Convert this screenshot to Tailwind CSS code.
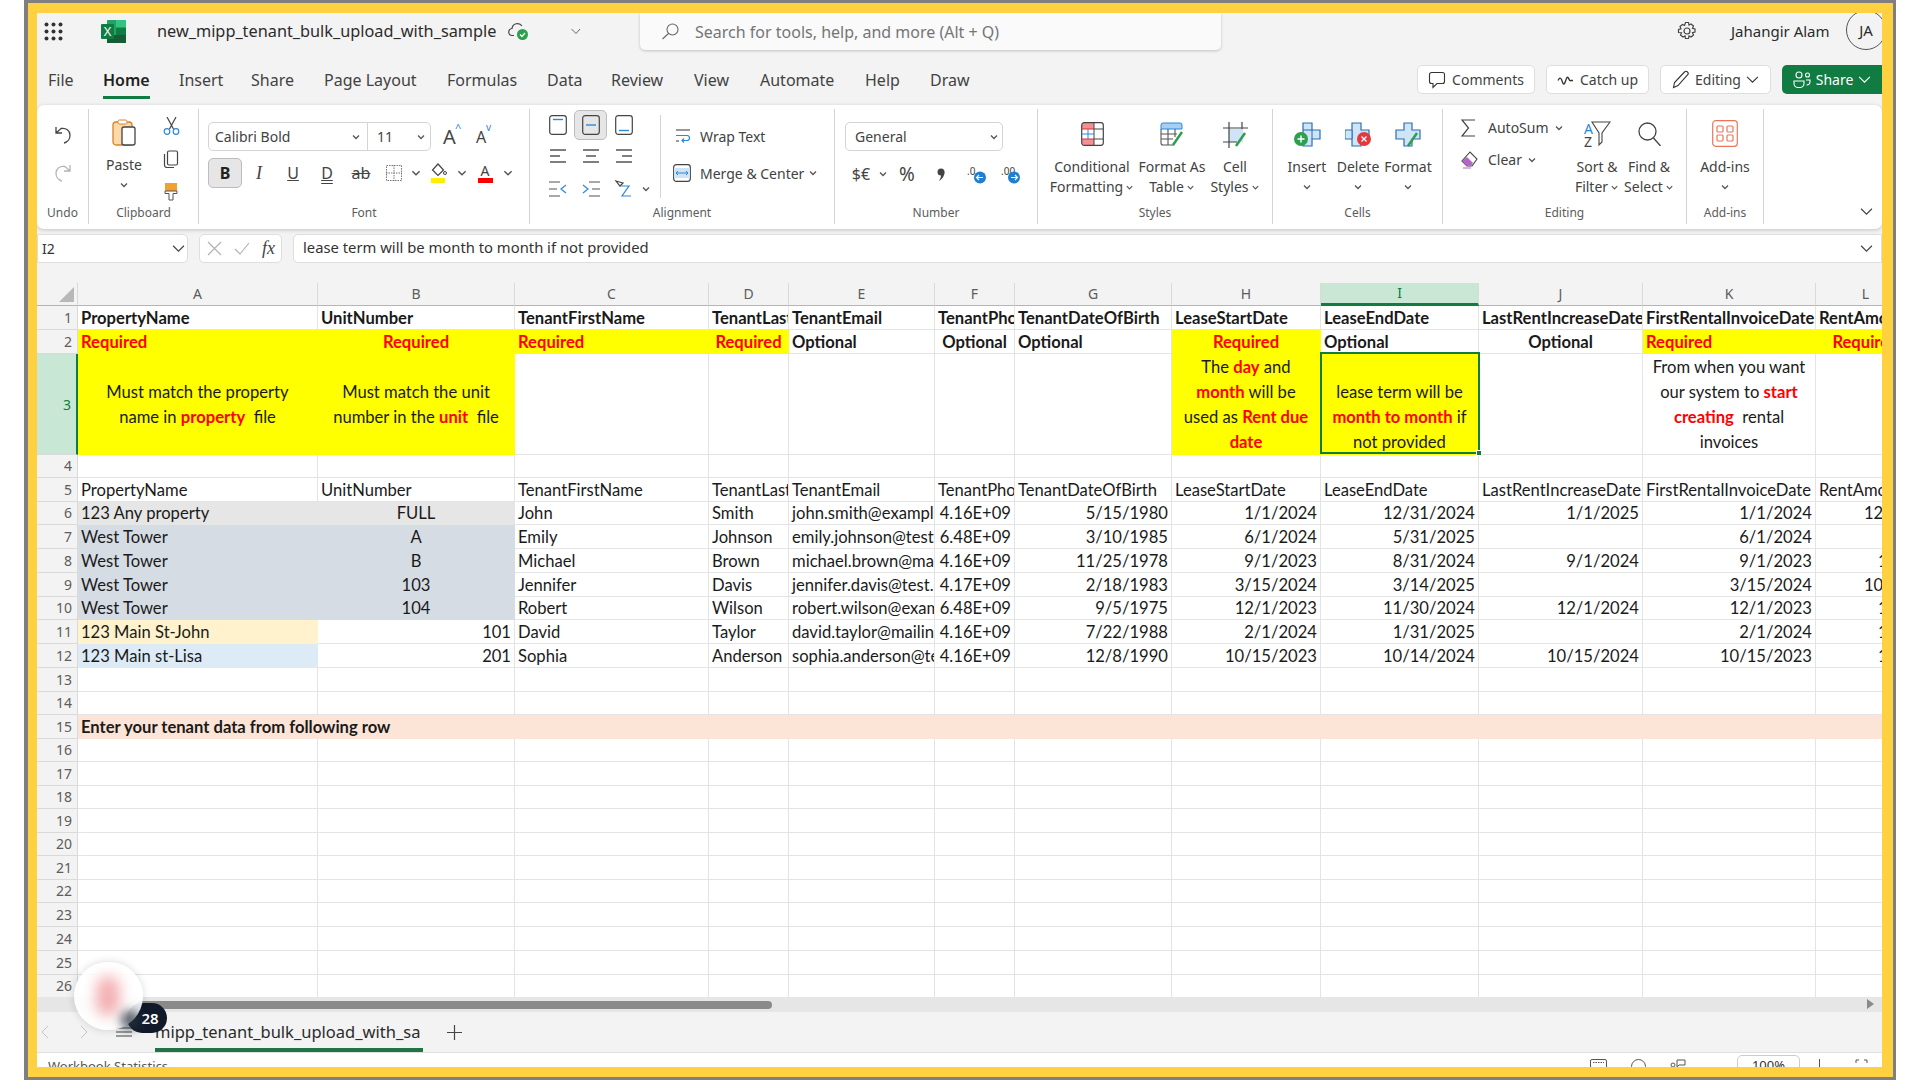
<!DOCTYPE html>
<html lang="en">
<head>
<meta charset="utf-8">
<title>new_mipp_tenant_bulk_upload_with_sample</title>
<script src="https://cdn.jsdelivr.net/npm/@tailwindcss/browser@4"></script>
</head>
<body class="bg-white overflow-hidden font-['Noto_Sans',sans-serif] text-[#333]">
<!-- Frame -->
<div class="ml-[24px] w-[1872px] h-[1080px] border-l-4 border-r-[3px] border-y-[3px] border-[#7f7f7f]">
<div class="relative w-full h-full border-l-[9px] border-r-[11px] border-y-[10px] border-[#ffd03f] bg-[#f3f3f3] flex flex-col overflow-hidden">

	<!-- Title bar -->
	<div class="h-[45px] pb-[9px] flex items-center shrink-0 relative">
		<svg class="ml-[7px] w-[19px] h-[19px]" viewBox="0 0 19 19" fill="#333"><circle cx="2.5" cy="2.5" r="2"/><circle cx="9.5" cy="2.5" r="2"/><circle cx="16.5" cy="2.5" r="2"/><circle cx="2.5" cy="9.5" r="2"/><circle cx="9.5" cy="9.5" r="2"/><circle cx="16.5" cy="9.5" r="2"/><circle cx="2.5" cy="16.5" r="2"/><circle cx="9.5" cy="16.5" r="2"/><circle cx="16.5" cy="16.5" r="2"/></svg>
		<svg class="ml-[38px] w-[25px] h-[23px]" viewBox="0 0 25 23"><rect x="6" width="19" height="23" rx="1" fill="#21a366"/><rect x="15" width="10" height="7" fill="#33c481"/><rect x="6" y="15" width="19" height="8" fill="#185c37"/><rect x="15" y="8" width="10" height="7" fill="#107c41"/><rect y="4" width="13" height="15" rx="1" fill="#107c41"/><text x="6.5" y="16" text-anchor="middle" font-size="12" fill="#fff" font-family="Liberation Sans">X</text></svg>
		<div class="ml-[31px] w-[351px] text-[16.300px] whitespace-nowrap text-[#2b2b2b]">new_mipp_tenant_bulk_upload_with_sample</div>
		<svg class="w-[21px] h-[20px]" viewBox="0 0 21 20" fill="none"><path d="M6 14.5H4.5a3.5 3.5 0 0 1-.5-7A5.5 5.5 0 0 1 14 5" stroke="#444" stroke-width="1.2"/><circle cx="14.5" cy="13.5" r="5.5" fill="#2e9e4f"/><path d="M12 13.5l2 2 3-3.5" stroke="#fff" stroke-width="1.2"/></svg>
		<svg class="ml-[41px] w-[12px] h-[12px]" viewBox="0 0 12 12" fill="none" stroke="#666"><path d="M1.5 4l4.500 4.500L10 4"/></svg>
		<div class="ml-[58px] self-start w-[581px] h-[37px] bg-[#fafafa] rounded-b-[5px] shadow-[0_1px_3px_rgba(0,0,0,0.2)] flex items-center">
			<svg class="ml-[21px] w-[19px] h-[17px]" viewBox="0 0 19 17" fill="none" stroke="#666" stroke-width="1.1"><circle cx="11.500" cy="6.500" r="5.500"/><path d="M7.500 10.500L1.500 16"/></svg>
			<span class="ml-[15px] text-[16px] text-[#757575] whitespace-nowrap">Search for tools, help, and more (Alt + Q)</span>
		</div>
		<svg class="ml-[456px] w-[20px] h-[20px]" viewBox="0 0 20 20" fill="none" stroke="#444" stroke-width="1.2"><circle cx="10" cy="10" r="3"/><path d="M8.500 1.500h3l.5 2.500 2-1 2.500 2-1 2.300 2.500.700v3l-2.500.700 1 2.300-2.500 2-2-1-.5 2.500h-3l-.5-2.500-2 1-2.500-2 1-2.300L1.500 11.500v-3L4 7.800 3 5.500l2.500-2 2 1z"/></svg>
		<span class="ml-[34px] text-[15px] text-[#2b2b2b] whitespace-nowrap">Jahangir Alam</span>
		<div class="absolute left-[1809px] top-[-3px] w-[40px] h-[40px] rounded-full border border-[#555] flex items-center justify-center text-[15px] text-[#2b2b2b]">JA</div>
	</div>

	<!-- Tabs -->
	<div class="h-[47px] flex items-start shrink-0 text-[16px] text-[#424242] whitespace-nowrap">
		<div class="flex pt-[10px] pl-[11px]">
			<span class="w-[55px]">File</span>
			<span class="w-[76px] relative font-semibold text-[#1f1f1f]">Home<span class="absolute left-0 top-[28px] w-[47px] h-[2.500px] bg-[#107c41]"></span></span>
			<span class="w-[72px]">Insert</span>
			<span class="w-[73px]">Share</span>
			<span class="w-[123px]">Page Layout</span>
			<span class="w-[100px]">Formulas</span>
			<span class="w-[64px]">Data</span>
			<span class="w-[83px]">Review</span>
			<span class="w-[66px]">View</span>
			<span class="w-[105px]">Automate</span>
			<span class="w-[65px]">Help</span>
			<span class="w-[60px]">Draw</span>
		</div>
		<div class="ml-auto mt-[7px] flex gap-[11px] text-[14px] h-[29px]">
			<div class="w-[118px] bg-white border border-[#dedede] rounded-[5px] flex items-center justify-center gap-[6px]"><svg class="w-[18px] h-[18px]" viewBox="0 0 18 18" fill="none" stroke="#333" stroke-width="1.1"><path d="M3.500 1.500h11a2 2 0 0 1 2 2v7a2 2 0 0 1-2 2H9l-4 4v-4H3.500a2 2 0 0 1-2-2v-7a2 2 0 0 1 2-2z"/></svg>Comments</div>
			<div class="w-[103px] bg-white border border-[#dedede] rounded-[5px] flex items-center justify-center gap-[6px]"><svg class="w-[17px] h-[12px]" viewBox="0 0 17 12" fill="none" stroke="#333" stroke-width="1.3"><path d="M1 6.500c1.500-3 2.500-3 3.500-1s1.500 6 3 4 2-8 3.500-6 1.500 4 3 3h2"/></svg>Catch up</div>
			<div class="w-[111px] bg-white border border-[#dedede] rounded-[5px] flex items-center justify-center gap-[5px]"><svg class="w-[18px] h-[19px]" viewBox="0 0 18 19" fill="none" stroke="#333" stroke-width="1.1"><path d="M1.500 17.500l1-5L12.500 2a2 2 0 0 1 3 3L6 15.500z"/></svg>Editing<svg class="w-[13px] h-[13px]" viewBox="0 0 12 12" fill="none" stroke="#333"><path d="M1 3.500l5 5 5-5"/></svg></div>
			<div class="w-[100px] bg-[#107c41] rounded-l-[5px] text-white flex items-center justify-center gap-[5px]"><svg class="w-[18px] h-[17px]" viewBox="0 0 18 17" fill="none" stroke="#fff" stroke-width="1.1"><circle cx="6" cy="4" r="3"/><circle cx="14.500" cy="4" r="2"/><path d="M1 10h10v2.500a4 4 0 0 1-4 4H5a4 4 0 0 1-4-4zM13 9h4v1.500a3.500 3.500 0 0 1-3.500 3.500"/></svg>Share<svg class="w-[13px] h-[13px]" viewBox="0 0 12 12" fill="none" stroke="#fff"><path d="M1 3.500l5 5 5-5"/></svg></div>
		</div>
	</div>

	<!-- Ribbon -->
	<div class="h-[124px] shrink-0 bg-white rounded-[7px] shadow-[0_1px_4px_rgba(0,0,0,0.2)] flex py-[4px] text-[14px] text-[#424242] whitespace-nowrap relative z-10 [&>div]:h-[115px] [&>div]:flex [&>div]:flex-col [&>div]:shrink-0">

		<!-- Undo -->
		<div class="w-[52px] border-r border-[#d4d4d4]">
			<div class="h-[95px] flex flex-col items-center pt-[16px] gap-[18px]">
				<svg class="w-[18px] h-[20px]" viewBox="0 0 18 20" fill="none" stroke="#444" stroke-width="1.3"><path d="M2 2v6h6M2 8l5-4.500c5-1 9 2 9 6.500a8 8 0 0 1-6 8"/></svg>
				<svg class="w-[18px] h-[20px]" viewBox="0 0 18 20" fill="none" stroke="#b5b5b5" stroke-width="1.3"><path d="M16 2v6h-6M16 8l-5-4.500C6 2.500 2 5.500 2 10a8 8 0 0 0 6 8"/></svg>
			</div>
			<div class="h-[18px] text-center text-[12px] text-[#5c5c5c] leading-[18px]">Undo</div>
		</div>

		<!-- Clipboard -->
		<div class="w-[110px] border-r border-[#d4d4d4]">
			<div class="h-[95px] flex">
				<div class="w-[70px] flex flex-col items-center pt-[10px]">
					<svg class="w-[24px] h-[27px]" viewBox="0 0 24 27" fill="none"><rect x="1" y="3" width="19" height="23" rx="3" fill="#fbd9a8" stroke="#d9822b" stroke-width="1.300"/><rect x="6" y="1" width="9" height="4" rx="1.500" fill="#fff" stroke="#d9822b"/><rect x="10" y="8" width="13" height="18" rx="2" fill="#fff" stroke="#444" stroke-width="1.300"/></svg>
					<div class="mt-[9px] leading-[20px]">Paste</div>
					<svg class="mt-[5px] w-[10px] h-[10px]" viewBox="0 0 10 10" fill="none" stroke="#555" stroke-width="1.300"><path d="M2 3.500l3 3 3-3"/></svg>
				</div>
				<div class="w-[24px] flex flex-col items-center pt-[8px] gap-[15px]">
					<svg class="w-[17px] h-[18px]" viewBox="0 0 17 18" fill="none" stroke-width="1.200"><path d="M4 0l6.500 12M13 0L6.500 12" stroke="#444"/><circle cx="4" cy="14.500" r="2.800" stroke="#2b88d8"/><circle cx="13" cy="14.500" r="2.800" stroke="#2b88d8"/></svg>
					<svg class="w-[16px] h-[18px]" viewBox="0 0 16 18" fill="none" stroke="#444" stroke-width="1.200"><rect x="4.500" y="1" width="10" height="14" rx="1.500"/><path d="M1.500 4v11a2.500 2.500 0 0 0 2.500 2.500h7"/></svg>
					<svg class="w-[14px] h-[18px]" viewBox="0 0 14 18"><rect x="1" y="0" width="12" height="8" fill="#f0a030"/><path d="M1 8h12v2.500H9V17H5v-6.500H1z" fill="#fff" stroke="#555"/></svg>
				</div>
			</div>
			<div class="h-[18px] text-center text-[12px] text-[#5c5c5c] leading-[18px]">Clipboard</div>
		</div>

		<!-- Font -->
		<div class="w-[331px] border-r border-[#d4d4d4]">
			<div class="h-[95px] pl-[9px] pt-[13px]">
				<div class="flex items-center h-[29px]">
					<div class="w-[223px] h-full border border-[#d4d4d4] rounded-[5px] flex items-center">
						<div class="w-[159px] pl-[6px] pr-[6px] h-full flex items-center justify-between border-r border-[#d4d4d4]"><span class="text-[14px]">Calibri Bold</span><svg class="w-[10px] h-[10px]" viewBox="0 0 10 10" fill="none" stroke="#555" stroke-width="1.300"><path d="M2 3.500l3 3 3-3"/></svg></div>
						<div class="flex-1 pl-[9px] pr-[4px] flex items-center justify-between"><span>11</span><svg class="w-[10px] h-[10px]" viewBox="0 0 10 10" fill="none" stroke="#555" stroke-width="1.300"><path d="M2 3.500l3 3 3-3"/></svg></div>
					</div>
					<div class="ml-[12px] w-[18px] text-[20px] leading-none text-[#444] relative">A<span class="absolute left-[12px] top-[-5px] text-[11px] text-[#2b88d8]">^</span></div>
					<div class="ml-[15px] w-[19px] text-[16px] leading-none text-[#444] relative">A<span class="absolute left-[10px] top-[-7px] text-[10px] text-[#2b88d8]">v</span></div>
				</div>
				<div class="flex items-center h-[30px] mt-[7px] text-[16px] text-[#444]">
					<div class="w-[34px] h-[30px] bg-[#e6e6e6] border border-[#bdbdbd] rounded-[5px] flex items-center justify-center font-bold text-[#222]">B</div>
					<div class="w-[34px] text-center italic font-['Liberation_Serif',serif] text-[18px]">I</div>
					<div class="w-[34px] text-center underline">U</div>
					<div class="w-[34px] text-center underline decoration-double">D</div>
					<div class="w-[34px] text-center line-through">ab</div>
					<svg class="mx-[8px] w-[16px] h-[16px]" viewBox="0 0 16 16" fill="none" stroke="#777" stroke-dasharray="1.500 1"><rect x=".5" y=".5" width="15" height="15"/><path d="M8 0v16M0 8h16"/></svg>
					<svg class="w-[12px] h-[12px]" viewBox="0 0 10 10" fill="none" stroke="#555" stroke-width="1.200"><path d="M2 3.500l3 3 3-3"/></svg>
					<svg class="mx-[9px] w-[16px] h-[20px]" viewBox="0 0 16 20"><path d="M7 1L1.500 7 7 12.500 12.500 7z" fill="none" stroke="#444" stroke-width="1.200"/><circle cx="14" cy="10" r="1.500" fill="none" stroke="#444"/><rect y="15" width="14" height="5" fill="#ffee00"/></svg>
					<svg class="w-[12px] h-[12px]" viewBox="0 0 10 10" fill="none" stroke="#555" stroke-width="1.200"><path d="M2 3.500l3 3 3-3"/></svg>
					<div class="w-[34px] flex flex-col items-center"><span class="text-[14px] leading-[15px]">A</span><span class="block w-[15px] h-[5px] bg-[#f00]"></span></div>
					<svg class="w-[12px] h-[12px]" viewBox="0 0 10 10" fill="none" stroke="#555" stroke-width="1.200"><path d="M2 3.500l3 3 3-3"/></svg>
				</div>
			</div>
			<div class="h-[18px] text-center text-[12px] text-[#5c5c5c] leading-[18px]">Font</div>
		</div>

		<!-- Alignment -->
		<div class="w-[305px] border-r border-[#d4d4d4]">
			<div class="h-[95px] flex">
				<div class="w-[130px] pl-[11px] grid grid-cols-[33px_33px_33px_12px] grid-rows-[31px_32px_33px] items-center justify-items-center">
					<svg class="w-[18px] h-[20px]" viewBox="0 0 18 20" fill="none"><rect x=".7" y=".7" width="16.600" height="18.600" rx="2.500" stroke="#444" stroke-width="1.200"/><path d="M4 4.500h10" stroke="#2b88d8" stroke-width="1.400"/></svg>
					<div class="w-[33px] h-[30px] bg-[#e6e6e6] border border-[#bdbdbd] rounded-[5px] flex items-center justify-center"><svg class="w-[18px] h-[20px]" viewBox="0 0 18 20" fill="none"><rect x=".7" y=".7" width="16.600" height="18.600" rx="2.500" stroke="#444" stroke-width="1.200"/><path d="M4 10h10" stroke="#2b88d8" stroke-width="1.400"/></svg></div>
					<svg class="w-[18px] h-[20px]" viewBox="0 0 18 20" fill="none"><rect x=".7" y=".7" width="16.600" height="18.600" rx="2.500" stroke="#444" stroke-width="1.200"/><path d="M4 15.500h10" stroke="#2b88d8" stroke-width="1.400"/></svg>
					<span></span>
					<svg class="w-[16px] h-[14px]" viewBox="0 0 16 14" stroke="#555" stroke-width="1.300"><path d="M0 1h16M0 7h10M0 13h16"/></svg>
					<svg class="w-[16px] h-[14px]" viewBox="0 0 16 14" stroke="#555" stroke-width="1.300"><path d="M0 1h16M3 7h10M0 13h16"/></svg>
					<svg class="w-[16px] h-[14px]" viewBox="0 0 16 14" stroke="#555" stroke-width="1.300"><path d="M0 1h16M6 7h10M0 13h16"/></svg>
					<span></span>
					<svg class="w-[18px] h-[16px]" viewBox="0 0 18 16" fill="none" stroke-width="1.200"><path d="M0 1h11M0 8h8M0 15h11" stroke="#555"/><path d="M17 4l-5 4 5 4" stroke="#2b88d8"/></svg>
					<svg class="w-[18px] h-[16px]" viewBox="0 0 18 16" fill="none" stroke-width="1.200"><path d="M7 1h11M10 8h8M7 15h11" stroke="#555"/><path d="M1 4l5 4-5 4" stroke="#2b88d8"/></svg>
					<svg class="w-[17px] h-[18px]" viewBox="0 0 17 18" fill="none" stroke-width="1.200"><path d="M1 1l7 2-3 3z" stroke="#444"/><path d="M5 6l9 0-7 10h9" stroke="#2b88d8"/></svg>
					<svg class="w-[10px] h-[10px]" viewBox="0 0 10 10" fill="none" stroke="#555" stroke-width="1.300"><path d="M2 3.500l3 3 3-3"/></svg>
				</div>
				<div class="w-px h-[83px] mt-[6px] bg-[#d4d4d4]"></div>
				<div class="pl-[14px] flex flex-col">
					<div class="mt-[16px] h-[22px] flex items-center"><svg class="w-[16px] h-[14px]" viewBox="0 0 16 14" fill="none" stroke-width="1.200"><path d="M1 1h14" stroke="#555"/><path d="M1 6.500h11a2.500 2.500 0 0 1 0 5H7M9 9.500l-2 2 2 2" stroke="#2b88d8"/><path d="M1 12h3" stroke="#555"/></svg><span class="ml-[9px]">Wrap Text</span></div>
					<div class="mt-[15px] h-[22px] flex items-center -ml-[2px]"><svg class="w-[18px] h-[18px]" viewBox="0 0 18 18" fill="none"><rect x=".7" y=".7" width="16.600" height="16.600" rx="2.500" stroke="#444" stroke-width="1.200"/><path d="M1 4h16v10H1z" fill="#cfe4f7"/><path d="M3 9h12M5 7L3 9l2 2M13 7l2 2-2 2" stroke="#2b88d8"/></svg><span class="ml-[9px]">Merge &amp; Center</span><svg class="ml-[4px] w-[10px] h-[10px]" viewBox="0 0 10 10" fill="none" stroke="#555" stroke-width="1.300"><path d="M2 3.500l3 3 3-3"/></svg></div>
				</div>
			</div>
			<div class="h-[18px] text-center text-[12px] text-[#5c5c5c] leading-[18px]">Alignment</div>
		</div>

		<!-- Number -->
		<div class="w-[203px] border-r border-[#d4d4d4]">
			<div class="h-[95px] pl-[10px] pt-[13px]">
				<div class="w-[158px] h-[29px] border border-[#d4d4d4] rounded-[5px] flex items-center justify-between pl-[9px] pr-[3px]"><span>General</span><svg class="w-[10px] h-[10px]" viewBox="0 0 10 10" fill="none" stroke="#555" stroke-width="1.300"><path d="M2 3.500l3 3 3-3"/></svg></div>
				<div class="mt-[12px] h-[22px] flex items-center text-[#444]">
					<div class="w-[32px] text-center text-[16px]">$€</div>
					<svg class="w-[12px] h-[10px]" viewBox="0 0 10 10" fill="none" stroke="#555" stroke-width="1.300"><path d="M2 3.500l3 3 3-3"/></svg>
					<div class="w-[36px] text-center text-[19px]">%</div>
					<div class="w-[32px] flex justify-center"><svg class="w-[8px] h-[13px]" viewBox="0 0 8 13" fill="#444"><circle cx="4" cy="4" r="3.500"/><path d="M7.500 4c0 4-2 7-5.500 9 1.500-2.500 2-4 2-6z"/></svg></div>
					<div class="w-[40px] flex justify-center"><svg class="w-[20px] h-[19px]" viewBox="0 0 20 19"><text x="0" y="10" font-size="10" fill="#444" font-family="Noto Sans">.0</text><circle cx="13" cy="12.500" r="6" fill="#1f7fd1"/><path d="M16 12.500h-6M12 10l-2.500 2.500L12 15" stroke="#fff" stroke-width="1.200" fill="none"/></svg></div>
					<div class="w-[28px] flex justify-center"><svg class="w-[20px] h-[19px]" viewBox="0 0 20 19"><text x="0" y="10" font-size="10" fill="#444" font-family="Noto Sans">.00</text><circle cx="13" cy="12.500" r="6" fill="#1f7fd1"/><path d="M10 12.500h6M14 10l2.500 2.500L14 15" stroke="#fff" stroke-width="1.200" fill="none"/></svg></div>
				</div>
			</div>
			<div class="h-[18px] text-center text-[12px] text-[#5c5c5c] leading-[18px]">Number</div>
		</div>

		<!-- Styles -->
		<div class="w-[235px] border-r border-[#d4d4d4]">
			<div class="h-[95px] pl-[10px] flex leading-[20px] text-center">
				<div class="w-[88px] flex flex-col items-center">
					<div class="h-[48px] pt-[13px]"><svg class="w-[23px] h-[24px]" viewBox="0 0 23 24" fill="none"><path d="M1 3a2 2 0 0 1 2-2h10v6H1zM1 17h12v6H3a2 2 0 0 1-2-2z" fill="#f78f95"/><rect x=".7" y=".7" width="21.600" height="22.600" rx="2.500" stroke="#444" stroke-width="1.200"/><path d="M1 7h12M1 17h12" stroke="#d13438" stroke-width="1.200"/><path d="M13 7h9M13 17h9M13 1v22" stroke="#444"/><path d="M7 7v10M1 12h12" stroke="#2b88d8"/></svg></div>
					<div>Conditional</div>
					<div class="flex items-center gap-[2px]">Formatting<svg class="w-[9px] h-[9px]" viewBox="0 0 10 10" fill="none" stroke="#555" stroke-width="1.300"><path d="M2 3.500l3 3 3-3"/></svg></div>
				</div>
				<div class="w-[72px] flex flex-col items-center">
					<div class="h-[48px] pt-[13px]"><svg class="w-[25px] h-[24px]" viewBox="0 0 25 24" fill="none"><path d="M1 3a2 2 0 0 1 2-2h17a2 2 0 0 1 2 2v4H1z" fill="#a6d0f2" stroke="#2b88d8"/><path d="M1 7v14a2 2 0 0 0 2 2h11M8 7v16M15 7v8M1 12h16M1 17h12" stroke="#555" stroke-width="1.100"/><path d="M13 23l9-13" stroke="#2e9e4f" stroke-width="2.500"/></svg></div>
					<div>Format As</div>
					<div class="flex items-center gap-[2px]">Table<svg class="w-[9px] h-[9px]" viewBox="0 0 10 10" fill="none" stroke="#555" stroke-width="1.300"><path d="M2 3.500l3 3 3-3"/></svg></div>
				</div>
				<div class="w-[54px] flex flex-col items-center">
					<div class="h-[48px] pt-[13px]"><svg class="w-[25px] h-[26px]" viewBox="0 0 25 26" fill="none"><path d="M6 7h14v13H6z" fill="#cfe4f7"/><path d="M6 0v26M19 0v7M0 6h25M0 20h14" stroke="#444" stroke-width="1.200"/><path d="M13 24l9-13" stroke="#2e9e4f" stroke-width="2.500"/></svg></div>
					<div>Cell</div>
					<div class="flex items-center gap-[2px]">Styles<svg class="w-[9px] h-[9px]" viewBox="0 0 10 10" fill="none" stroke="#555" stroke-width="1.300"><path d="M2 3.500l3 3 3-3"/></svg></div>
				</div>
			</div>
			<div class="h-[18px] text-center text-[12px] text-[#5c5c5c] leading-[18px]">Styles</div>
		</div>

		<!-- Cells -->
		<div class="w-[170px] border-r border-[#d4d4d4]">
			<div class="h-[95px] pl-[10px] flex leading-[20px] text-center">
				<div class="w-[48px] flex flex-col items-center">
					<div class="h-[48px] pt-[13px]"><svg class="w-[27px] h-[25px]" viewBox="0 0 27 25" fill="none"><path d="M9 1h9v7h8v9h-8v7H9z" fill="#cfe4f7" stroke="#2b6fb0" stroke-width="1.200"/><path d="M9 8h9v9" stroke="#2b6fb0"/><circle cx="7" cy="17" r="7" fill="#2e9e4f"/><path d="M3.500 17h7M7 13.500v7" stroke="#fff" stroke-width="1.400"/></svg></div>
					<div>Insert</div>
					<svg class="mt-[5px] w-[10px] h-[10px]" viewBox="0 0 10 10" fill="none" stroke="#555" stroke-width="1.300"><path d="M2 3.500l3 3 3-3"/></svg>
				</div>
				<div class="w-[54px] flex flex-col items-center">
					<div class="h-[48px] pt-[13px]"><svg class="w-[27px] h-[25px]" viewBox="0 0 27 25" fill="none"><path d="M7 1h9v7h8v9h-8v7H7z" fill="#cfe4f7" stroke="#2b6fb0" stroke-width="1.200"/><path d="M0 8h7v9H0z" fill="#cfe4f7" stroke="#2b6fb0"/><circle cx="19" cy="17" r="7" fill="#e03a3e"/><path d="M16.500 14.500l5 5M21.500 14.500l-5 5" stroke="#fff" stroke-width="1.300"/></svg></div>
					<div>Delete</div>
					<svg class="mt-[5px] w-[10px] h-[10px]" viewBox="0 0 10 10" fill="none" stroke="#555" stroke-width="1.300"><path d="M2 3.500l3 3 3-3"/></svg>
				</div>
				<div class="w-[46px] flex flex-col items-center">
					<div class="h-[48px] pt-[13px]"><svg class="w-[27px] h-[25px]" viewBox="0 0 27 25" fill="none"><path d="M9 1h8v7h8v9h-8v7H9v-7H1V8h8z" fill="#cfe4f7" stroke="#2b6fb0" stroke-width="1.200"/><path d="M13 24l9-13" stroke="#2e9e4f" stroke-width="2.500"/></svg></div>
					<div>Format</div>
					<svg class="mt-[5px] w-[10px] h-[10px]" viewBox="0 0 10 10" fill="none" stroke="#555" stroke-width="1.300"><path d="M2 3.500l3 3 3-3"/></svg>
				</div>
			</div>
			<div class="h-[18px] text-center text-[12px] text-[#5c5c5c] leading-[18px]">Cells</div>
		</div>

		<!-- Editing -->
		<div class="w-[244px] border-r border-[#d4d4d4]">
			<div class="h-[95px] flex leading-[20px]">
				<div class="w-[127px] pl-[18px] flex flex-col">
					<div class="mt-[8px] h-[22px] flex items-center"><svg class="w-[15px] h-[18px] mr-[12px]" viewBox="0 0 15 18" fill="none" stroke="#444" stroke-width="1.200"><path d="M14 1H1l6.500 8L1 17h13"/></svg>AutoSum<svg class="ml-[5px] w-[10px] h-[10px]" viewBox="0 0 10 10" fill="none" stroke="#555" stroke-width="1.300"><path d="M2 3.500l3 3 3-3"/></svg></div>
					<div class="mt-[10px] h-[22px] flex items-center"><svg class="w-[17px] h-[18px] mr-[10px]" viewBox="0 0 17 18" fill="none"><path d="M1 10l5 5h5L16 8 9 1z" stroke="#444" stroke-width="1.100"/><path d="M1 10l5 5h4l2-3-6-6z" fill="#b566c7"/><path d="M2 17h8" stroke="#b566c7"/></svg>Clear<svg class="ml-[5px] w-[10px] h-[10px]" viewBox="0 0 10 10" fill="none" stroke="#555" stroke-width="1.300"><path d="M2 3.500l3 3 3-3"/></svg></div>
				</div>
				<div class="w-[54px] flex flex-col items-center">
					<div class="h-[48px] pt-[12px]"><svg class="w-[27px] h-[27px]" viewBox="0 0 27 27" fill="none"><path d="M8 1h18l-8 11v9l-3 3v-12z" stroke="#444" stroke-width="1.100"/><text x="0" y="13" font-size="14" fill="#2b88d8" font-family="Noto Sans">A</text><text x="0" y="26" font-size="14" fill="#444" font-family="Noto Sans">Z</text></svg></div>
					<div>Sort &amp;</div>
					<div class="flex items-center gap-[2px]">Filter<svg class="w-[9px] h-[9px]" viewBox="0 0 10 10" fill="none" stroke="#555" stroke-width="1.300"><path d="M2 3.500l3 3 3-3"/></svg></div>
				</div>
				<div class="w-[50px] flex flex-col items-center">
					<div class="h-[48px] pt-[13px]"><svg class="w-[23px] h-[24px]" viewBox="0 0 23 24" fill="none" stroke="#444" stroke-width="1.300"><circle cx="9.500" cy="9.500" r="8.500"/><path d="M15.500 16l7 8"/></svg></div>
					<div>Find &amp;</div>
					<div class="flex items-center gap-[2px]">Select<svg class="w-[9px] h-[9px]" viewBox="0 0 10 10" fill="none" stroke="#555" stroke-width="1.300"><path d="M2 3.500l3 3 3-3"/></svg></div>
				</div>
			</div>
			<div class="h-[18px] text-center text-[12px] text-[#5c5c5c] leading-[18px]">Editing</div>
		</div>

		<!-- Add-ins -->
		<div class="w-[77px] border-r border-[#d4d4d4]">
			<div class="h-[95px] flex flex-col items-center leading-[20px]">
				<div class="h-[48px] pt-[11px]"><svg class="w-[26px] h-[27px]" viewBox="0 0 26 27" fill="none" stroke="#e8775a" stroke-width="1.200"><rect x=".7" y=".7" width="24.600" height="25.600" rx="3"/><rect x="5" y="6" width="6" height="6" rx="1"/><rect x="15" y="6" width="6" height="6" rx="1"/><rect x="5" y="15" width="6" height="6" rx="1"/><rect x="15" y="15" width="6" height="6" rx="1"/></svg></div>
				<div>Add-ins</div>
				<svg class="mt-[5px] w-[10px] h-[10px]" viewBox="0 0 10 10" fill="none" stroke="#555" stroke-width="1.300"><path d="M2 3.500l3 3 3-3"/></svg>
			</div>
			<div class="h-[18px] text-center text-[12px] text-[#5c5c5c] leading-[18px]">Add-ins</div>
		</div>

		<div class="flex-1 items-end justify-end pr-[9px] pb-[6px]">
			<svg class="w-[13px] h-[13px]" viewBox="0 0 12 12" fill="none" stroke="#444" stroke-width="1.100"><path d="M1 3.500l5 5 5-5"/></svg>
		</div>
	</div>

	<!-- Formula bar -->
	<div class="h-[29px] mt-[5px] shrink-0 flex text-[14px] text-[#333]">
		<div class="w-[151px] bg-white border border-[#dedede] rounded-r-[5px] flex items-center justify-between pl-[4px] pr-[2px]"><span>I2</span><svg class="w-[13px] h-[13px]" viewBox="0 0 12 12" fill="none" stroke="#444" stroke-width="1.100"><path d="M1 3.500l5 5 5-5"/></svg></div>
		<div class="ml-[11px] w-[83px] bg-white border border-[#dedede] rounded-[5px] flex items-center pl-[7px] gap-[12px]">
			<svg class="w-[15px] h-[15px]" viewBox="0 0 15 15" fill="none" stroke="#b0b0b0" stroke-width="1.100"><path d="M1 1l13 13M14 1L1 14"/></svg>
			<svg class="w-[16px] h-[13px]" viewBox="0 0 16 13" fill="none" stroke="#b0b0b0" stroke-width="1.100"><path d="M1 7l5 5L15 1"/></svg>
			<span class="italic font-['Liberation_Serif',serif] text-[18px] text-[#444]">fx</span>
		</div>
		<div class="ml-[11px] flex-1 bg-white border border-[#dedede] rounded-l-[5px] flex items-center justify-between pl-[9px] pr-[8px]"><span class="text-[14.800px] -mt-[2px]">lease term will be month to month if not provided</span><svg class="w-[13px] h-[13px]" viewBox="0 0 12 12" fill="none" stroke="#444" stroke-width="1.100"><path d="M1 3.500l5 5 5-5"/></svg></div>
	</div>

	<!-- Sheet -->
	<div class="relative h-[714px] mt-[20px] shrink-0 overflow-hidden bg-white">
		<table class="table-fixed w-[1879px] border-separate border-spacing-0 font-['Lato',sans-serif] text-[16.600px] leading-[22px] text-[#1a1a1a] whitespace-nowrap [&_td]:border-r [&_td]:border-b [&_td]:border-[#e4e4e4] [&_td]:px-[3px] [&_td]:py-0 [&_td]:overflow-hidden [&_th]:bg-[#f3f3f3] [&_th]:font-['Noto_Sans',sans-serif] [&_th]:font-normal [&_th]:text-[14px] [&_th]:text-right [&_th]:pr-[5px] [&_th]:text-[#5c5c5c] [&_th]:border-r [&_th]:border-b [&_th]:border-[#dadada] [&_th]:p-0 [&_thead_th]:text-center [&_thead_th]:pr-0 [&_thead_th]:border-b-[#b5b5b5]">
			<colgroup>
				<col class="w-[41px]"><col class="w-[240px]"><col class="w-[197px]"><col class="w-[194px]"><col class="w-[80px]"><col class="w-[146px]"><col class="w-[80px]"><col class="w-[157px]"><col class="w-[149px]"><col class="w-[158px]"><col class="w-[164px]"><col class="w-[173px]"><col class="w-[100px]">
			</colgroup>
			<thead>
				<tr class="h-[23px] leading-[16px]">
					<th class="relative"><span class="absolute right-[3px] bottom-[3px] w-0 h-0 border-l-[15px] border-l-transparent border-b-[15px] border-b-[#b8b8b8]"></span></th>
					<th>A</th><th>B</th><th>C</th><th>D</th><th>E</th><th>F</th><th>G</th><th>H</th>
					<th class="bg-[#c9e7d5]! text-[#107c41]! border-b-[3px]! border-b-[#107c41]!">I</th>
					<th>J</th><th>K</th><th>L</th>
				</tr>
			</thead>
			<tbody>
				<tr class="h-[24px] font-bold [&_td]:pt-[1px]">
					<th>1</th><td>PropertyName</td><td>UnitNumber</td><td>TenantFirstName</td><td>TenantLastName</td><td>TenantEmail</td><td>TenantPhone</td><td>TenantDateOfBirth</td><td>LeaseStartDate</td><td>LeaseEndDate</td><td>LastRentIncreaseDate</td><td>FirstRentalInvoiceDate</td><td>RentAmount</td>
				</tr>
				<tr class="h-[24px] font-bold">
					<th>2</th>
					<td class="bg-[#ff0] border-[#ff0]! text-[#f00]">Required</td>
					<td class="bg-[#ff0] border-[#ff0]! text-[#f00] text-center">Required</td>
					<td class="bg-[#ff0] border-[#ff0]! text-[#f00]">Required</td>
					<td class="bg-[#ff0] border-[#ff0]! text-[#f00] text-center">Required</td>
					<td>Optional</td>
					<td class="text-center">Optional</td>
					<td>Optional</td>
					<td class="bg-[#ff0] border-[#ff0]! text-[#f00] text-center">Required</td>
					<td>Optional</td>
					<td class="text-center">Optional</td>
					<td class="bg-[#ff0] border-[#ff0]! text-[#f00]">Required</td>
					<td class="bg-[#ff0] border-[#ff0]! text-[#f00] text-center">Required</td>
				</tr>
				<tr class="h-[101px] leading-[25px]">
					<th class="bg-[#c9e7d5]! text-[#107c41]! border-r-2! border-r-[#107c41]!">3</th>
					<td class="bg-[#ff0] border-[#ff0]! text-center"><div class="translate-y-[1px]">Must match the property<br>name in <b class="text-[#f00]">property</b>&nbsp; file</div></td>
					<td class="bg-[#ff0] border-[#ff0]! text-center"><div class="translate-y-[1px]">Must match the unit<br>number in the <b class="text-[#f00]">unit</b>&nbsp; file</div></td>
					<td></td><td></td><td></td><td></td><td></td>
					<td class="bg-[#ff0] border-[#ff0]! text-center align-bottom"><div class="translate-y-[1px]">The <b class="text-[#f00]">day</b> and<br><b class="text-[#f00]">month</b> will be<br>used as <b class="text-[#f00]">Rent due</b><br><b class="text-[#f00]">date</b></div></td>
					<td class="bg-[#ff0] border-[#ff0]! text-center align-bottom"><div class="translate-y-[1px]">lease term will be<br><b class="text-[#f00]">month to month</b> if<br>not provided</div></td>
					<td></td>
					<td class="text-center align-bottom"><div class="translate-y-[1px]">From when you want<br>our system to <b class="text-[#f00]">start</b><br><b class="text-[#f00]">creating</b>&nbsp; rental<br>invoices</div></td>
					<td></td>
				</tr>
				<tr class="h-[23px]"><th>4</th><td></td><td></td><td></td><td></td><td></td><td></td><td></td><td></td><td></td><td></td><td></td><td></td></tr>
				<tr class="h-[24px]">
					<th>5</th><td>PropertyName</td><td>UnitNumber</td><td>TenantFirstName</td><td>TenantLastName</td><td>TenantEmail</td><td>TenantPhone</td><td>TenantDateOfBirth</td><td>LeaseStartDate</td><td>LeaseEndDate</td><td>LastRentIncreaseDate</td><td>FirstRentalInvoiceDate</td><td>RentAmount</td>
				</tr>
				<tr class="h-[23px] [&_td]:text-right">
					<th>6</th>
					<td class="bg-[#e7e6e6] border-[#e7e6e6]! text-left!">123 Any property</td>
					<td class="bg-[#e7e6e6] border-[#e7e6e6]! text-center!">FULL</td>
					<td class="text-left!">John</td><td class="text-left!">Smith</td><td class="text-left!">john.smith@example.com</td>
					<td>4.16E+09</td><td>5/15/1980</td><td>1/1/2024</td><td>12/31/2024</td><td>1/1/2025</td><td>1/1/2024</td><td class="text-left! pl-[48px]!">12</td>
				</tr>
				<tr class="h-[24px] [&_td]:text-right">
					<th>7</th>
					<td class="bg-[#d6dce4] border-[#d6dce4]! text-left!">West Tower</td>
					<td class="bg-[#d6dce4] border-[#d6dce4]! text-center!">A</td>
					<td class="text-left!">Emily</td><td class="text-left!">Johnson</td><td class="text-left!">emily.johnson@test.com</td>
					<td>6.48E+09</td><td>3/10/1985</td><td>6/1/2024</td><td>5/31/2025</td><td></td><td>6/1/2024</td><td></td>
				</tr>
				<tr class="h-[24px] [&_td]:text-right">
					<th>8</th>
					<td class="bg-[#d6dce4] border-[#d6dce4]! text-left!">West Tower</td>
					<td class="bg-[#d6dce4] border-[#d6dce4]! text-center!">B</td>
					<td class="text-left!">Michael</td><td class="text-left!">Brown</td><td class="text-left!">michael.brown@mail.com</td>
					<td>4.16E+09</td><td>11/25/1978</td><td>9/1/2023</td><td>8/31/2024</td><td>9/1/2024</td><td>9/1/2023</td><td class="text-left! pl-[62px]!">1</td>
				</tr>
				<tr class="h-[24px] [&_td]:text-right">
					<th>9</th>
					<td class="bg-[#d6dce4] border-[#d6dce4]! text-left!">West Tower</td>
					<td class="bg-[#d6dce4] border-[#d6dce4]! text-center!">103</td>
					<td class="text-left!">Jennifer</td><td class="text-left!">Davis</td><td class="text-left!">jennifer.davis@test.com</td>
					<td>4.17E+09</td><td>2/18/1983</td><td>3/15/2024</td><td>3/14/2025</td><td></td><td>3/15/2024</td><td class="text-left! pl-[48px]!">10</td>
				</tr>
				<tr class="h-[23px] [&_td]:text-right">
					<th>10</th>
					<td class="bg-[#d6dce4] border-[#d6dce4]! text-left!">West Tower</td>
					<td class="bg-[#d6dce4] border-[#d6dce4]! text-center!">104</td>
					<td class="text-left!">Robert</td><td class="text-left!">Wilson</td><td class="text-left!">robert.wilson@example.com</td>
					<td>6.48E+09</td><td>9/5/1975</td><td>12/1/2023</td><td>11/30/2024</td><td>12/1/2024</td><td>12/1/2023</td><td class="text-left! pl-[62px]!">1</td>
				</tr>
				<tr class="h-[24px] [&_td]:text-right">
					<th>11</th>
					<td class="bg-[#fff2cc] border-[#fff2cc]! text-left!">123 Main St-John</td>
					<td>101</td>
					<td class="text-left!">David</td><td class="text-left!">Taylor</td><td class="text-left!">david.taylor@mailinator.com</td>
					<td>4.16E+09</td><td>7/22/1988</td><td>2/1/2024</td><td>1/31/2025</td><td></td><td>2/1/2024</td><td class="text-left! pl-[62px]!">1</td>
				</tr>
				<tr class="h-[24px] [&_td]:text-right">
					<th>12</th>
					<td class="bg-[#ddebf7] border-[#ddebf7]! text-left!">123 Main st-Lisa</td>
					<td>201</td>
					<td class="text-left!">Sophia</td><td class="text-left!">Anderson</td><td class="text-left!">sophia.anderson@test.com</td>
					<td>4.16E+09</td><td>12/8/1990</td><td>10/15/2023</td><td>10/14/2024</td><td>10/15/2024</td><td>10/15/2023</td><td class="text-left! pl-[62px]!">1</td>
				</tr>
				<tr class="h-[24px]"><th>13</th><td></td><td></td><td></td><td></td><td></td><td></td><td></td><td></td><td></td><td></td><td></td><td></td></tr>
				<tr class="h-[23px]"><th>14</th><td></td><td></td><td></td><td></td><td></td><td></td><td></td><td></td><td></td><td></td><td></td><td></td></tr>
				<tr class="h-[24px]"><th>15</th><td colspan="12" class="bg-[#fce4d6] border-[#fce4d6]! font-bold">Enter your tenant data from following row</td></tr>
				<tr class="h-[23px]"><th>16</th><td></td><td></td><td></td><td></td><td></td><td></td><td></td><td></td><td></td><td></td><td></td><td></td></tr>
				<tr class="h-[24px]"><th>17</th><td></td><td></td><td></td><td></td><td></td><td></td><td></td><td></td><td></td><td></td><td></td><td></td></tr>
				<tr class="h-[23px]"><th>18</th><td></td><td></td><td></td><td></td><td></td><td></td><td></td><td></td><td></td><td></td><td></td><td></td></tr>
				<tr class="h-[24px]"><th>19</th><td></td><td></td><td></td><td></td><td></td><td></td><td></td><td></td><td></td><td></td><td></td><td></td></tr>
				<tr class="h-[23px]"><th>20</th><td></td><td></td><td></td><td></td><td></td><td></td><td></td><td></td><td></td><td></td><td></td><td></td></tr>
				<tr class="h-[24px]"><th>21</th><td></td><td></td><td></td><td></td><td></td><td></td><td></td><td></td><td></td><td></td><td></td><td></td></tr>
				<tr class="h-[23px]"><th>22</th><td></td><td></td><td></td><td></td><td></td><td></td><td></td><td></td><td></td><td></td><td></td><td></td></tr>
				<tr class="h-[24px]"><th>23</th><td></td><td></td><td></td><td></td><td></td><td></td><td></td><td></td><td></td><td></td><td></td><td></td></tr>
				<tr class="h-[24px]"><th>24</th><td></td><td></td><td></td><td></td><td></td><td></td><td></td><td></td><td></td><td></td><td></td><td></td></tr>
				<tr class="h-[24px]"><th>25</th><td></td><td></td><td></td><td></td><td></td><td></td><td></td><td></td><td></td><td></td><td></td><td></td></tr>
				<tr class="h-[23px]"><th>26</th><td></td><td></td><td></td><td></td><td></td><td></td><td></td><td></td><td></td><td></td><td></td><td></td></tr>
			</tbody>
		</table>
		<!-- Selected cell I3 -->
		<div class="absolute left-[1283px] top-[69px] w-[160px] h-[102px] border-2 border-[#107c41]">
			<span class="absolute right-[-4px] bottom-[-4px] w-[6px] h-[6px] bg-[#107c41] border border-white"></span>
		</div>
	</div>

	<!-- Scrollbar -->
	<div class="h-[15px] shrink-0 bg-[#e6e6e6] flex items-center relative">
		<div class="ml-[100px] w-[635px] h-[8px] rounded-full bg-[#8a8a8a]"></div>
		<span class="absolute right-[8px] top-[2px] w-0 h-0 border-l-[7px] border-l-[#8a8a8a] border-y-[5px] border-y-transparent"></span>
	</div>

	<!-- Sheet tabs -->
	<div class="h-[41px] shrink-0 border-b border-[#e0e0e0] flex items-center text-[16.500px] text-[#2b2b2b]">
		<svg class="ml-[3px] w-[9px] h-[14px]" viewBox="0 0 9 14" fill="none" stroke="#c4c4c4"><path d="M8 1L2 7l6 6"/></svg>
		<svg class="ml-[31px] w-[9px] h-[14px]" viewBox="0 0 9 14" fill="none" stroke="#c4c4c4"><path d="M1 1l6 6-6 6"/></svg>
		<svg class="ml-[27px] w-[16px] h-[12px]" viewBox="0 0 16 12" stroke="#444" stroke-width="1.200"><path d="M0 2h16M0 6h16M0 10h16"/></svg>
		<div class="ml-[23px] h-full w-[268px] relative flex items-center whitespace-nowrap">mipp_tenant_bulk_upload_with_sa<span class="absolute left-0 bottom-0 w-full h-[4px] bg-[#217346]"></span></div>
		<svg class="ml-[24px] w-[15px] h-[15px]" viewBox="0 0 15 15" stroke="#444" stroke-width="1.200"><path d="M7.500 0v15M0 7.500h15"/></svg>
	</div>

	<!-- Status bar -->
	<div class="h-[14px] shrink-0 bg-white overflow-hidden flex text-[13px] text-[#555] whitespace-nowrap leading-[27px] relative">
		<span class="ml-[11px]">Workbook Statistics</span>
		<div class="ml-auto mr-[14px] flex items-start pt-[6px] h-[20px]">
			<svg class="w-[17px] h-[12px]" viewBox="0 0 17 12" fill="none" stroke="#555"><rect x=".5" y=".5" width="16" height="11" rx="1.500"/><path d="M3 3.500h11" stroke-dasharray="1.500 1"/></svg>
			<svg class="ml-[24px] w-[15px] h-[15px]" viewBox="0 0 15 15" fill="none" stroke="#555"><circle cx="7.500" cy="7.500" r="7"/></svg>
			<svg class="ml-[24px] w-[16px] h-[12px]" viewBox="0 0 16 12" fill="none" stroke="#555"><circle cx="3" cy="6" r="2"/><path d="M7 1h8v5H9l-2 2z"/></svg>
			<div class="ml-[51px] -mt-[4px] w-[63px] h-[20px] border border-[#ccc] rounded-[5px] text-center leading-[18px] text-[#333]">100%</div>
			<svg class="ml-[15px] w-[9px] h-[9px]" viewBox="0 0 9 9" stroke="#555"><path d="M4.500 0v9"/></svg>
			<svg class="ml-[31px] w-[13px] h-[13px]" viewBox="0 0 13 13" fill="none" stroke="#555"><path d="M1 4V1h3M9 1h3v3"/></svg>
		</div>
	</div>

	<!-- Badge and floating avatar -->
	<div class="absolute left-[90px] top-[990px] w-[40px] h-[30px] rounded-full bg-[#111a2b] text-white text-[15px] font-semibold flex items-center justify-center pl-[6px]">28</div>
	<div class="absolute left-[37px] top-[949px] w-[69px] h-[68px] rounded-full bg-white/90 shadow-[0_0_8px_rgba(0,0,0,0.15)]">
		<div class="absolute left-[22px] top-[14px] w-[24px] h-[40px] rounded-full bg-[#ef8f93]/70 blur-[7px]"></div>
		<div class="absolute left-[46px] top-[48px] w-[20px] h-[20px] rounded-full bg-[#2b3442]/70 blur-[5px]"></div>
	</div>
</div>
</div>
</body>
</html>
